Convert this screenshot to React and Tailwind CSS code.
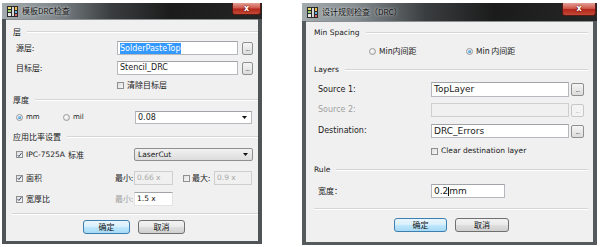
import React from "react";

const CJK = { fontFamily: '"Noto Sans CJK SC", "DejaVu Sans", sans-serif' };
const LAT = { fontFamily: '"DejaVu Sans", "Noto Sans CJK SC", sans-serif' };

function AppIcon() {
  return (
    <svg width="11" height="11" viewBox="0 0 11 11" className="shrink-0">
      <rect x="0" y="0" width="11" height="11" fill="#2a2a2a" />
      <rect x="1" y="1" width="3" height="2" fill="#e8e06a" />
      <rect x="1" y="4" width="3" height="2" fill="#9bd36a" />
      <rect x="1" y="7" width="3" height="3" fill="#e8e8e8" />
      <rect x="5" y="1" width="2" height="9" fill="#d8d8d8" />
      <rect x="8" y="1" width="2" height="3" fill="#f2c24a" />
      <rect x="8" y="5" width="2" height="2" fill="#6ab0e0" />
      <rect x="8" y="8" width="2" height="2" fill="#e06a6a" />
    </svg>
  );
}

function TitleBar({ title, h, closeW, closeH }) {
  return (
    <div
      className={`flex items-start shrink-0 bg-[linear-gradient(to_right,#a3abaf_0%,#858d91_18%,#3a3d3f_42%,#1b1b1b_65%,#262626_100%)] ${h}`}
    >
      <div className="flex items-center h-full pl-[5px] gap-[4px]">
        <AppIcon />
        <span
          className="text-[8px] leading-none text-[#111] [text-shadow:0_0_3px_#ffffff]"
          style={CJK}
        >
          {title}
        </span>
      </div>
      <div className="flex-1" />
      <div
        className={`${closeW} ${closeH} mr-[1px] rounded-b-[3px] border border-t-0 border-[#5a1a14] bg-[linear-gradient(to_bottom,#e3a096_0%,#d0584a_45%,#b2281c_55%,#c24a36_100%)] flex items-center justify-center`}
      >
        <span className="text-white text-[8px] font-bold leading-none [text-shadow:0_0_2px_#400]" style={LAT}>
          x
        </span>
      </div>
    </div>
  );
}

function GroupHeader({ label, font = CJK, size = "text-[8px]", lineGap = "ml-[6px]" }) {
  return (
    <div className="flex items-center h-[12px]">
      <span className={`${size} leading-none text-[#1a1a1a]`} style={font}>
        {label}
      </span>
      <div className={`flex-1 ${lineGap} border-t border-[#d5d5d5] border-b border-b-white`} />
    </div>
  );
}

function TextBox({ w, h = "h-[14px]", children, disabled, className = "" }) {
  return (
    <div
      className={`${w} ${h} shrink-0 flex items-center px-[2px] border ${
        disabled
          ? "border-[#cfcfcf] bg-[#f0f0f0]"
          : "border-[#b5b8bd] border-t-[#a0a3a8] bg-white"
      } ${className}`}
    >
      {children}
    </div>
  );
}

function Browse({ w = "w-[11px]", h = "h-[13px]", disabled }) {
  return (
    <div
      className={`${w} ${h} shrink-0 rounded-[2px] border ${
        disabled ? "border-[#c8c8c8] bg-[#f3f3f3]" : "border-[#8e8f8f] bg-[linear-gradient(to_bottom,#f5f5f5,#dcdcdc)]"
      } flex items-end justify-center pb-[2px]`}
    >
      <span
        className={`text-[6px] leading-none tracking-[-0.5px] ${disabled ? "text-[#aaa]" : "text-[#222]"}`}
        style={LAT}
      >
        ...
      </span>
    </div>
  );
}

function Arrow() {
  return (
    <svg width="5" height="3" viewBox="0 0 5 3" className="shrink-0">
      <path d="M0 0 L5 0 L2.5 3 Z" fill="#111" />
    </svg>
  );
}

function Checkbox({ checked }) {
  return (
    <div className="w-[7px] h-[7px] shrink-0 border border-[#8f8f8f] bg-[linear-gradient(135deg,#dedede,#f8f8f8)] flex items-center justify-center">
      {checked && (
        <svg width="6" height="6" viewBox="0 0 6 6">
          <path d="M0.8 3.2 L2.3 4.8 L5.3 0.8" stroke="#2a3a6a" strokeWidth="1.1" fill="none" />
        </svg>
      )}
    </div>
  );
}

function Radio({ checked }) {
  return (
    <div className="w-[7px] h-[7px] shrink-0 rounded-full border border-[#9a9a9a] bg-[radial-gradient(circle_at_40%_40%,#ffffff,#d4d4d4)] flex items-center justify-center">
      {checked && <div className="w-[3px] h-[3px] rounded-full bg-[radial-gradient(circle_at_35%_35%,#7fd0ff,#1f6fb8)]" />}
    </div>
  );
}

function Btn({ label, w, h, primary }) {
  return (
    <div
      className={`${w} ${h} shrink-0 rounded-[3px] border flex items-center justify-center ${
        primary
          ? "border-[#3c7fb1] bg-[linear-gradient(to_bottom,#eaf6fd_0%,#d9f0fc_45%,#bee6fd_55%,#a7d9f5_100%)]"
          : "border-[#707070] bg-[linear-gradient(to_bottom,#f2f2f2_0%,#ebebeb_45%,#dddddd_55%,#cfcfcf_100%)]"
      }`}
    >
      <span className="text-[8px] leading-none text-[#111]" style={CJK}>
        {label}
      </span>
    </div>
  );
}

function LeftDialog() {
  const lbl = "text-[8px] leading-none text-[#1a1a1a]";
  const en = "text-[8px] leading-none text-[#1a1a1a]";
  return (
    <div className="w-[260px] h-[241px] ml-[2px] mt-[3px] flex flex-col bg-[#4f5457] shrink-0">
      <TitleBar title="模板DRC检查" h="h-[16px]" closeW="w-[29px]" closeH="h-[12px]" />
      <div className="flex-1 mx-[4px] mb-[3px] bg-[#f0f0f0] border-t border-[#8a8f92] flex flex-col pl-[7px]">
        <div className="mt-[6px]">
          <GroupHeader label="层" />
        </div>
        {/* 源层 */}
        <div className="mt-[3px] flex items-center h-[14px]">
          <span className={`${lbl} w-[104px] pl-[3px]`} style={CJK}>源层:</span>
          <TextBox w="w-[121px]">
            <span className="bg-[#3399ff] text-white text-[8px] leading-[11px] px-[0px]" style={LAT}>
              SolderPasteTop
            </span>
          </TextBox>
          <div className="ml-[4px]"><Browse /></div>
        </div>
        {/* 目标层 */}
        <div className="mt-[6px] flex items-center h-[14px]">
          <span className={`${lbl} w-[104px] pl-[3px]`} style={CJK}>目标层:</span>
          <TextBox w="w-[121px]">
            <span className={en} style={LAT}>Stencil_DRC</span>
          </TextBox>
          <div className="ml-[4px]"><Browse /></div>
        </div>
        <div className="mt-[5px] flex items-center h-[10px] pl-[104px] gap-[3px]">
          <Checkbox />
          <span className={lbl} style={CJK}>清除目标层</span>
        </div>
        <div className="mt-[4px]">
          <GroupHeader label="厚度" />
        </div>
        {/* thickness */}
        <div className="mt-[5px] flex items-center h-[13px]">
          <div className="w-[50px] pl-[3px] flex items-center gap-[3px]">
            <Radio checked />
            <span className="text-[7px] leading-none text-[#1a1a1a]" style={LAT}>mm</span>
          </div>
          <div className="w-[72px] flex items-center gap-[3px]">
            <Radio />
            <span className="text-[7px] leading-none text-[#1a1a1a]" style={LAT}>mil</span>
          </div>
          <TextBox w="w-[117px]" h="h-[13px]" className="justify-between pr-[4px]">
            <span className={en} style={LAT}>0.08</span>
            <Arrow />
          </TextBox>
        </div>
        <div className="mt-[7px]">
          <GroupHeader label="应用比率设置" />
        </div>
        {/* IPC */}
        <div className="mt-[5px] flex items-center h-[13px]">
          <div className="w-[121px] pl-[3px] flex items-center gap-[3px]">
            <Checkbox checked />
            <span className="text-[7.5px] leading-none text-[#1a1a1a]" style={LAT}>IPC-7525A</span>
            <span className={lbl} style={CJK}>标准</span>
          </div>
          <div className="w-[119px] h-[13px] rounded-[2px] border border-[#8e8f8f] bg-[linear-gradient(to_bottom,#f2f2f2,#dcdcdc)] flex items-center justify-between pl-[3px] pr-[4px]">
            <span className="text-[7.5px] leading-none text-[#1a1a1a]" style={LAT}>LaserCut</span>
            <Arrow />
          </div>
        </div>
        {/* 面积 */}
        <div className="mt-[10px] flex items-center h-[14px]">
          <div className="w-[102px] pl-[3px] flex items-center gap-[3px]">
            <Checkbox checked />
            <span className={lbl} style={CJK}>面积</span>
          </div>
          <span className={`${lbl} w-[19px]`} style={CJK}>最小:</span>
          <TextBox w="w-[39px]" disabled>
            <span className="text-[7.5px] leading-none text-[#a8a8a8]" style={LAT}>0.66 x</span>
          </TextBox>
          <div className="ml-[10px] flex items-center gap-[2px] w-[31px]">
            <Checkbox />
            <span className={lbl} style={CJK}>最大:</span>
          </div>
          <TextBox w="w-[38px]" disabled>
            <span className="text-[7.5px] leading-none text-[#a8a8a8]" style={LAT}>0.9 x</span>
          </TextBox>
        </div>
        {/* 宽厚比 */}
        <div className="mt-[7px] flex items-center h-[14px]">
          <div className="w-[102px] pl-[3px] flex items-center gap-[3px]">
            <Checkbox checked />
            <span className={lbl} style={CJK}>宽厚比</span>
          </div>
          <span className={`${lbl} w-[19px] text-[#a0a0a0]`} style={CJK}>最小:</span>
          <TextBox w="w-[39px]" className="border-[#e3e3e3]">
            <span className="text-[7.5px] leading-none text-[#1a1a1a]" style={LAT}>1.5 x</span>
          </TextBox>
        </div>
        <div className="mt-[7px] ml-[-1px] border-t border-[#d5d5d5] border-b border-b-white" />
        <div className="mt-[5px] flex items-center pl-[70px] gap-[8px]">
          <Btn label="确定" w="w-[47px]" h="h-[14px]" primary />
          <Btn label="取消" w="w-[47px]" h="h-[14px]" />
        </div>
      </div>
    </div>
  );
}

function RightDialog() {
  const en = "text-[8px] leading-none text-[#1a1a1a]";
  const lbl = "text-[8px] leading-none text-[#1a1a1a]";
  return (
    <div className="w-[295px] h-[242px] ml-[40px] mt-[3px] flex flex-col bg-[#555a5d] shrink-0">
      <TitleBar title="设计规则检查（DRC）" h="h-[18px]" closeW="w-[34px]" closeH="h-[13px]" />
      <div className="flex-1 mx-[4px] mb-[3px] bg-[#f0f0f0] border-t border-[#8a8f92] flex flex-col pl-[8px] pr-[5px]">
        <div className="mt-[5px]">
          <GroupHeader label="Min Spacing" font={LAT} size="text-[7.5px]" lineGap="ml-[6px]" />
        </div>
        <div className="mt-[6px] flex items-center h-[12px] pl-[55px]">
          <div className="w-[97px] flex items-center gap-[3px]">
            <Radio />
            <span className={lbl} style={CJK}>Min内间距</span>
          </div>
          <div className="flex items-center gap-[3px]">
            <Radio checked />
            <span className={lbl} style={CJK}>Min 内间距</span>
          </div>
        </div>
        <div className="mt-[7px]">
          <GroupHeader label="Layers" font={LAT} size="text-[7.5px]" lineGap="ml-[6px]" />
        </div>
        <div className="mt-[6px] flex items-center h-[15px]">
          <span className={`${en} w-[117px] pl-[4px]`} style={LAT}>Source 1:</span>
          <TextBox w="w-[138px]" h="h-[15px]">
            <span className="text-[9px] leading-none text-[#1a1a1a]" style={LAT}>TopLayer</span>
          </TextBox>
          <div className="ml-[2px]"><Browse w="w-[13px]" h="h-[13px]" /></div>
        </div>
        <div className="mt-[6px] flex items-center h-[14px]">
          <span className={`${en} w-[117px] pl-[4px] text-[#a0a0a0]`} style={LAT}>Source 2:</span>
          <TextBox w="w-[138px]" h="h-[14px]" disabled />
          <div className="ml-[2px]"><Browse w="w-[13px]" h="h-[13px]" disabled /></div>
        </div>
        <div className="mt-[7px] flex items-center h-[14px]">
          <span className={`${en} w-[117px] pl-[4px]`} style={LAT}>Destination:</span>
          <TextBox w="w-[138px]" h="h-[14px]">
            <span className="text-[9px] leading-none text-[#1a1a1a]" style={LAT}>DRC_Errors</span>
          </TextBox>
          <div className="ml-[2px]"><Browse w="w-[13px]" h="h-[13px]" /></div>
        </div>
        <div className="mt-[8px] flex items-center h-[10px] pl-[117px] gap-[3px]">
          <Checkbox />
          <span className="text-[7.5px] leading-none text-[#1a1a1a]" style={LAT}>Clear destination layer</span>
        </div>
        <div className="mt-[8px]">
          <GroupHeader label="Rule" font={LAT} size="text-[7.5px]" lineGap="ml-[6px]" />
        </div>
        <div className="mt-[8px] flex items-center h-[14px]">
          <span className={`${lbl} w-[117px] pl-[4px]`} style={CJK}>宽度：</span>
          <TextBox w="w-[74px]" h="h-[14px]">
            <span className="text-[9px] leading-none text-[#1a1a1a]" style={LAT}>0.2</span>
            <span className="w-[1px] h-[9px] bg-[#111]" />
            <span className="text-[9px] leading-none text-[#1a1a1a]" style={LAT}>mm</span>
          </TextBox>
        </div>
        <div className="mt-[10px] border-t border-[#d5d5d5] border-b border-b-white" />
        <div className="mt-[8px] flex items-center pl-[80px] gap-[8px]">
          <Btn label="确定" w="w-[53px]" h="h-[14px]" primary />
          <Btn label="取消" w="w-[54px]" h="h-[14px]" />
        </div>
      </div>
    </div>
  );
}

export default function App() {
  return (
    <div className="w-[600px] h-[247px] bg-white flex items-start overflow-hidden">
      <LeftDialog />
      <RightDialog />
    </div>
  );
}
